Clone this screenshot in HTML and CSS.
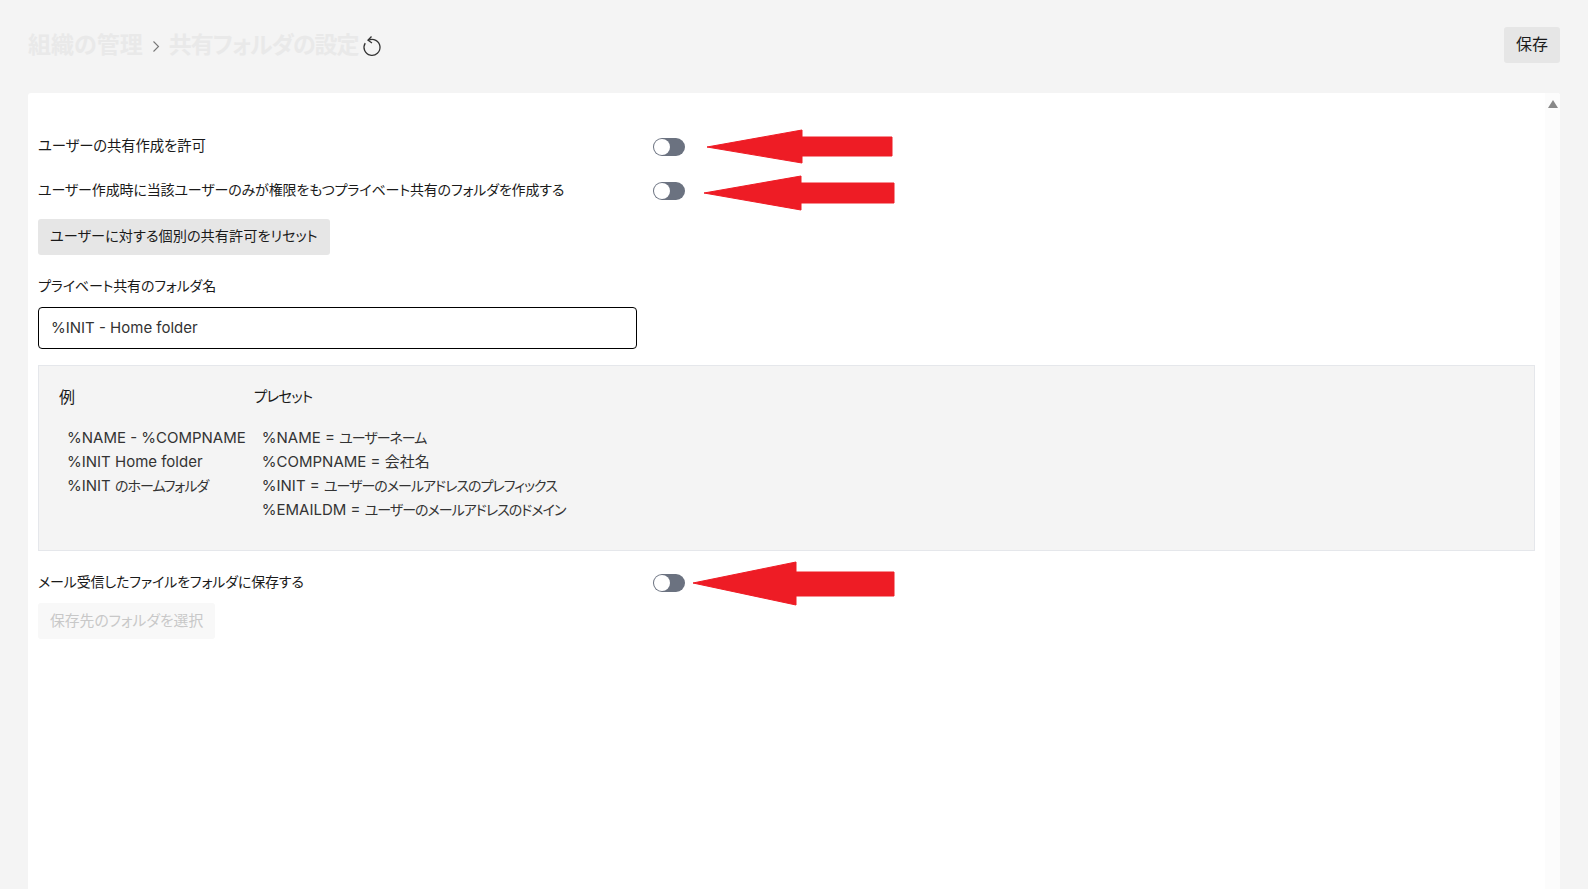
FILE: index.html
```html
<!DOCTYPE html>
<html lang="ja">
<head>
    <meta charset="UTF-8">
    <meta name="viewport" content="width=device-width, initial-scale=1.0">
    <title>共有フォルダの設定</title>
    <link rel="stylesheet" href="styles.css">
</head>
<body>
    <!-- ヘッダー -->
    <div class="cabecalho">
        <div class="trilha">
            <span class="trilha-texto">組織の管理</span>
            <svg class="trilha-seta" width="8" height="11" viewBox="0 0 8 11"><path d="M1.5 .5l5 5-5 5" fill="none" stroke="#777" stroke-width="1.1"/></svg>
            <span class="trilha-texto trilha-atual">共有フォルダの設定</span>
            <svg class="recarregar" width="20" height="22" viewBox="0 0 20 22"><path d="M6.5 5.2A8 8 0 1 1 3.2 8.2" fill="none" stroke="#333" stroke-width="1.3"/><path d="M9.5 1.5L6 5.2l4 2.8" fill="none" stroke="#333" stroke-width="1.3"/></svg>
        </div>
        <button class="botao">保存</button>
    </div>

    <div class="painel">
        <div class="conteudo">
            <div class="linha">
                <span class="linha-rotulo rotulo-kanji">ユーザーの共有作成を許可</span>
                <span class="chave"></span>
            </div>
            <div class="linha">
                <span class="linha-rotulo">ユーザー作成時に当該ユーザーのみが権限をもつプライベート共有のフォルダを作成する</span>
                <span class="chave"></span>
            </div>
            <button class="botao botao-reset">ユーザーに対する個別の共有許可をリセット</button>

            <div class="campo-rotulo">プライベート共有のフォルダ名</div>
            <input class="campo" type="text" value="%INIT - Home folder">

            <!-- 例とプレセット -->
            <div class="ajuda">
                <div class="ajuda-coluna">
                    <div class="ajuda-titulo">例</div>
                    <div class="ajuda-itens">
                        <div>%NAME - %COMPNAME</div>
                        <div>%INIT Home folder</div>
                        <div>%INIT <span class="kana">のホームフォルダ</span></div>
                    </div>
                </div>
                <div class="ajuda-coluna">
                    <div class="ajuda-titulo kana-titulo">プレセット</div>
                    <div class="ajuda-itens">
                        <div>%NAME = <span class="kana">ユーザーネーム</span></div>
                        <div>%COMPNAME = 会社名</div>
                        <div>%INIT = <span class="kana">ユーザーのメールアドレスのプレフィックス</span></div>
                        <div>%EMAILDM = <span class="kana">ユーザーのメールアドレスのドメイン</span></div>
                    </div>
                </div>
            </div>

            <div class="linha linha-mail">
                <span class="linha-rotulo">メール受信したファイルをフォルダに保存する</span>
                <span class="chave"></span>
            </div>
            <button class="botao botao-off">保存先のフォルダを選択</button>
        </div>
        <div class="rolagem"><span class="rolagem-seta"></span></div>

        <!-- 注釈の矢印 -->
        <svg class="setas" width="1532" height="796" viewBox="28 93 1532 796">
            <path class="seta" d="M707 147L802 130V137H892V156H802V163Z"/>
            <path class="seta" d="M704 193L801 176V183H894V203H801V210Z"/>
            <path class="seta" d="M693 583L796 562V572H894V596H796V605Z"/>
        </svg>
    </div>
</body>
</html>
```

FILE: styles.css
```css
html, body {
    height: 100%;
}

body {
    margin: 0;
    padding: 0 28px;
    box-sizing: border-box;
    background-color: #f4f4f4;
    color: #1a1a1a;
    font-family: Inter, "Noto Sans CJK JP", sans-serif;
    font-size: 14px;
    font-feature-settings: "palt";
    display: flex;
    flex-direction: column;
    overflow: hidden;
}

.cabecalho {
    height: 93px;
    flex: none;
    display: flex;
    align-items: center;
    justify-content: space-between;
    padding-bottom: 5px;
    box-sizing: border-box;
}

.trilha {
    display: flex;
    align-items: center;
    margin-bottom: 3px;
}

.trilha-texto {
    font-size: 23px;
    font-weight: 700;
    color: #e9e9e9;
}

.trilha-atual {
    letter-spacing: -1px;
}

.trilha-seta {
    margin: 8px 9px 0 9px;
}

.recarregar {
    margin: 6px 0 0 3px;
}

.botao {
    height: 36px;
    padding: 0 12px 4px;
    border: none;
    border-radius: 3px;
    background-color: #e6e6e6;
    color: #1a1a1a;
    font-family: inherit;
    font-size: 14.2px;
    font-feature-settings: inherit;
}

.cabecalho .botao {
    margin-top: 2px;
    font-size: 16px;
}

.painel {
    flex: 1;
    position: relative;
    display: flex;
    background-color: white;
    border-radius: 3px 3px 0 0;
    overflow: hidden;
}

.conteudo {
    flex: 1;
    padding: 42px 10px 0;
    display: flex;
    flex-direction: column;
    align-items: flex-start;
}

.linha {
    height: 24px;
    margin-bottom: 20px;
    display: flex;
    align-items: center;
}

.linha-rotulo {
    width: 615px;
    padding-bottom: 4px;
    letter-spacing: -0.15px;
}

.rotulo-kanji {
    font-size: 14.4px;
    padding-bottom: 5px;
}

.chave {
    width: 32px;
    height: 18px;
    box-sizing: border-box;
    border-radius: 9px;
    background-color: #6b7280;
    position: relative;
}

.chave::before {
    content: "";
    position: absolute;
    left: 1px;
    top: 1px;
    width: 16px;
    height: 16px;
    border-radius: 50%;
    background-color: white;
}

.botao-reset {
    margin-top: -4px;
}

.campo-rotulo {
    margin-top: 19px;
    line-height: 24px;
    letter-spacing: -0.15px;
}

.campo {
    width: 599px;
    height: 42px;
    margin-top: 9px;
    padding: 0 12px 2px;
    box-sizing: border-box;
    border: 1px solid black;
    border-radius: 4px;
    color: #333;
    font-family: inherit;
    font-size: 15px;
}

.ajuda {
    align-self: stretch;
    height: 186px;
    margin-top: 16px;
    padding: 19px 20px 0;
    box-sizing: border-box;
    border: 1px solid #e5e7eb;
    background-color: #f4f4f4;
    display: flex;
    gap: 8px;
    line-height: 24px;
}

.ajuda-titulo {
    margin-bottom: 16px;
    font-size: 16px;
}

.kana-titulo {
    font-size: 14.5px;
    letter-spacing: -0.8px;
}

.ajuda-itens {
    padding: 1px 0 0 8px;
    font-size: 15px;
    color: #333;
}

.kana {
    font-size: 14px;
    letter-spacing: -1px;
}

.linha-mail {
    margin-top: 20px;
    margin-bottom: 8px;
}

.botao-off {
    background-color: #f8f8f8;
    color: #c8c8c8;
    font-size: 14.8px;
}

.rolagem {
    width: 15px;
    background-color: #fcfcfc;
    display: flex;
    justify-content: center;
    padding-top: 7px;
    box-sizing: border-box;
}

.rolagem-seta {
    width: 0;
    height: 0;
    border-left: 5px solid transparent;
    border-right: 5px solid transparent;
    border-bottom: 8px solid #888;
}

.setas {
    position: absolute;
    left: 0;
    top: 0;
    pointer-events: none;
}

.seta {
    fill: #ee1c25;
    stroke: #ee1c25;
    stroke-width: 1;
    stroke-linejoin: round;
}
```
